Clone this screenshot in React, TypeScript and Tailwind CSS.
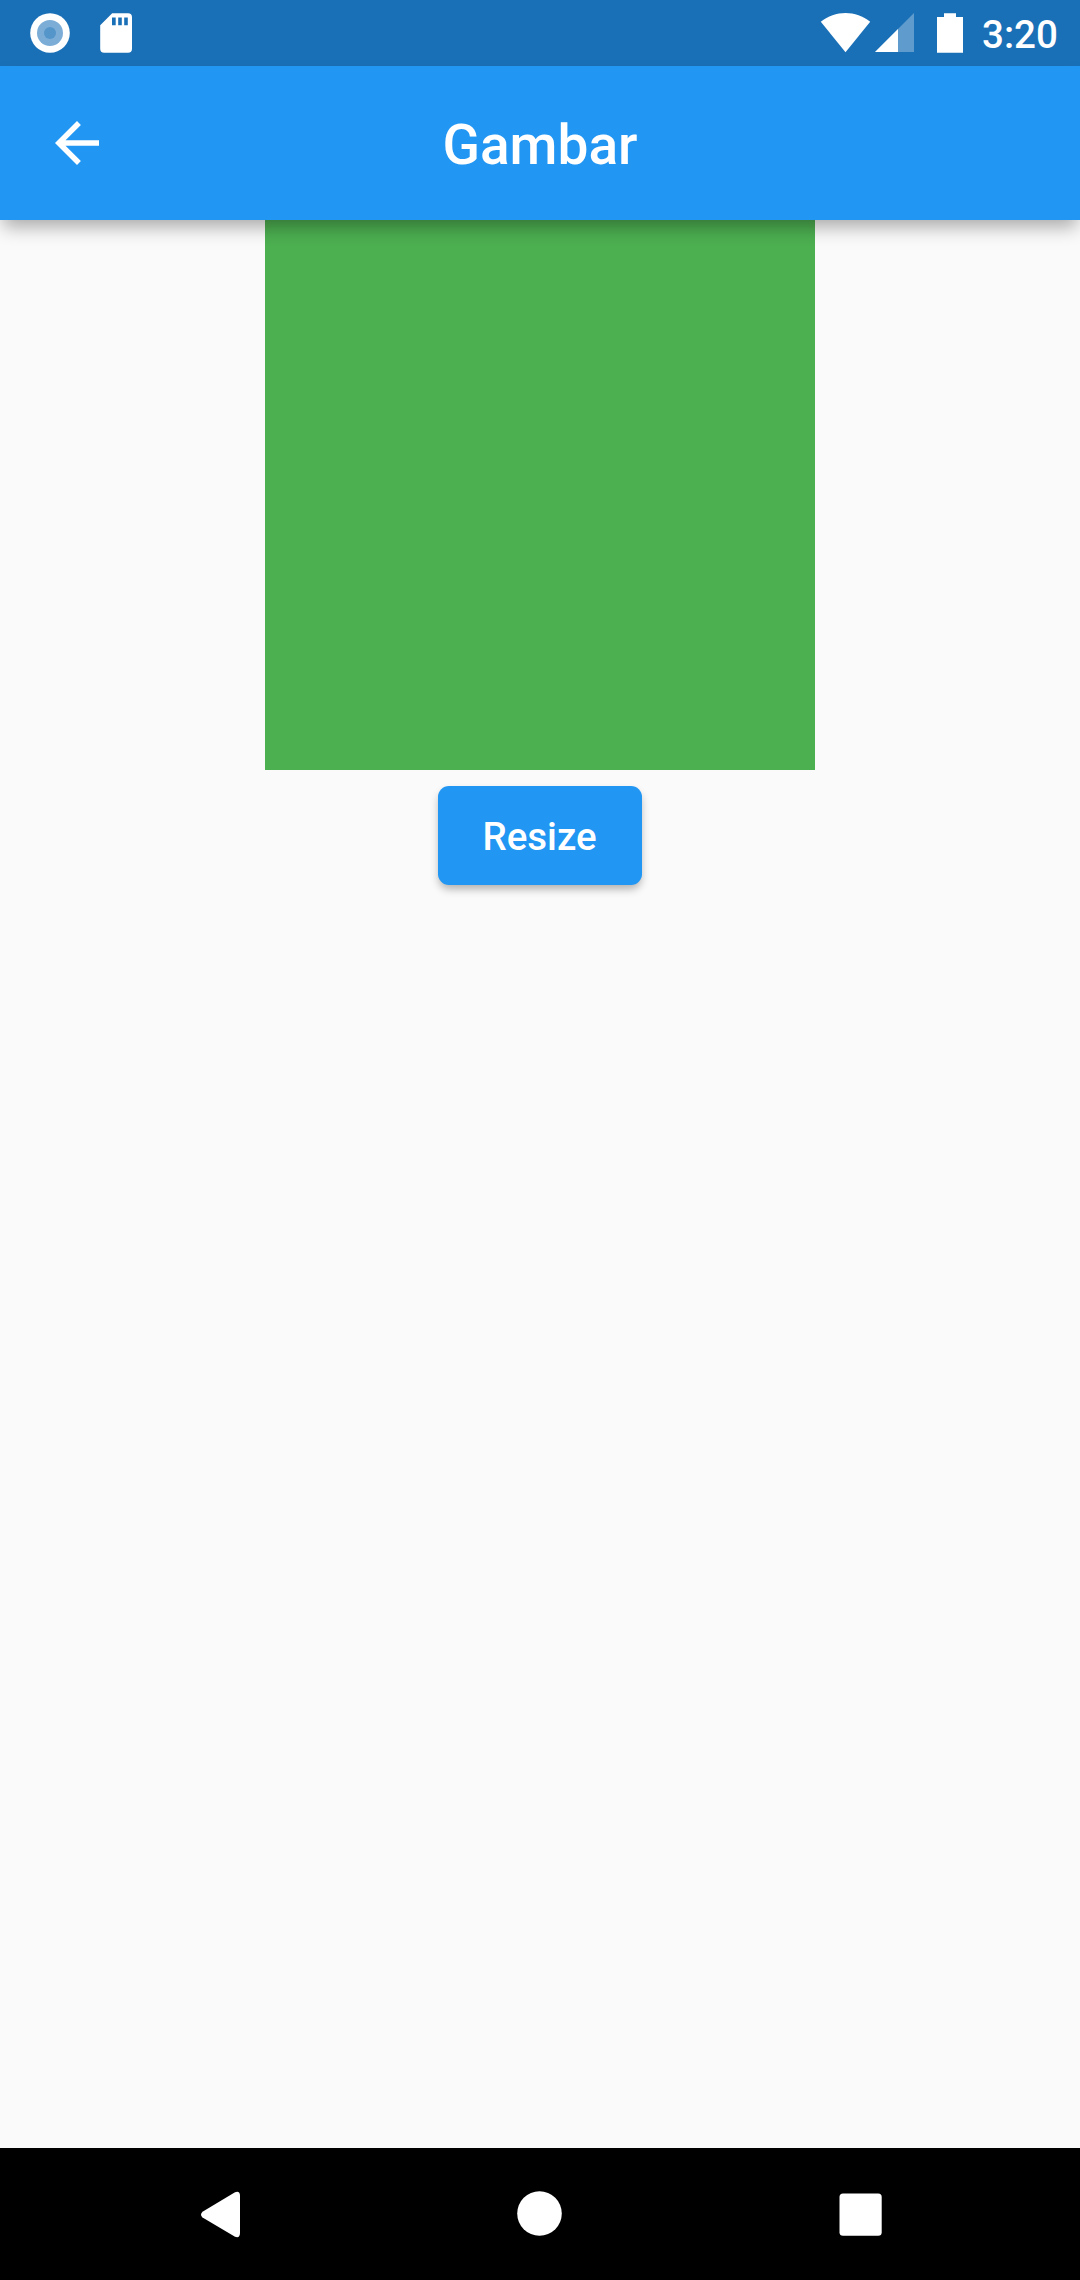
import { useState } from "react";

function StatusBar() {
  return (
    <div className="flex h-[66px] items-center justify-between bg-[#1a70b7] text-white">
      <svg className="h-[66px] w-[160px]" viewBox="0 0 160 66">
        <circle cx="50" cy="33" r="19.8" fill="#fff" />
        <circle cx="50" cy="33" r="13" fill="#7cadd7" />
        <circle cx="50" cy="33" r="6" fill="#5495ca" />
        <path
          fillRule="evenodd"
          fill="#fff"
          d="M112.2 13.2H128a4 4 0 0 1 4 4V48.700a4 4 0 0 1-4 4H104.200a4 4 0 0 1-4-4V25.200ZM112 17.500V25.300H115.700V17.500ZM118.200 17.500V25.300H121.800V17.500ZM124.200 17.500V25.300H127.800V17.500Z"
        />
      </svg>
      <div className="flex items-center">
        <svg className="h-[66px] w-[163px]" viewBox="818 0 163 66">
          <path fill="#fff" d="M820.800 21.800C835 10.100 856 10.100 870.200 21.800L845.500 52.300Z" />
          <path fill="#5f9bcd" d="M914 13V52H875Z" />
          <path fill="#fff" d="M898 29V52H875Z" />
          <path fill="#fff" d="M944 13.200H956V17H963V52.700H937V17H944Z" />
        </svg>
        <span className="w-[99px] pt-[4px] pl-[1px] text-[38.500px] leading-none font-medium">3:20</span>
      </div>
    </div>
  );
}

function AppBar() {
  return (
    <header className="relative z-10 grid h-[154px] grid-cols-[154px_1fr_154px] items-center bg-[#2196f3] text-white shadow-[0_10px_17px_-3px_rgba(0,0,0,0.32)]">
      <button aria-label="Back" className="flex h-full items-center justify-center">
        <svg className="size-[66px]" viewBox="0 0 24 24" fill="currentColor">
          <path d="M20 11H7.830l5.590-5.590L12 4l-8 8 8 8 1.410-1.410L7.830 13H20v-2z" />
        </svg>
      </button>
      <h1 className="pt-[4px] text-center text-[55px] leading-none font-medium">Gambar</h1>
    </header>
  );
}

function NavigationBar() {
  return (
    <nav className="flex h-[132px] bg-black">
      <svg className="h-[132px] w-full" viewBox="0 0 1080 132" fill="#fff">
        <path d="M202.500 63.800 235 44.300Q240 42.500 240 48V85Q240 90.500 235 88.700L202.500 69.600Q199.500 66.700 202.500 63.800Z" />
        <circle cx="539.500" cy="65.500" r="22.300" />
        <rect x="839.500" y="45.500" width="42.200" height="42.200" rx="3.500" />
      </svg>
    </nav>
  );
}

export default function App() {
  const [size, setSize] = useState(550);
  return (
    <div className="flex h-[2280px] w-[1080px] flex-col overflow-hidden bg-[#fafafa] font-['Roboto',sans-serif]">
      <StatusBar />
      <AppBar />
      <main className="flex flex-1 flex-col items-center">
        <div className="bg-[#4caf50]" style={{ width: size, height: size }} />
        <button
          onClick={() => setSize(size === 550 ? 275 : 550)}
          className="mt-[16.400px] h-[99px] w-[204px] rounded-[11px] bg-[#2196f3] pt-[2px] pr-[1px] text-[38.500px] leading-none font-medium text-white shadow-[0_5px_8px_-1px_rgba(0,0,0,0.3)]"
        >
          Resize
        </button>
      </main>
      <NavigationBar />
    </div>
  );
}
